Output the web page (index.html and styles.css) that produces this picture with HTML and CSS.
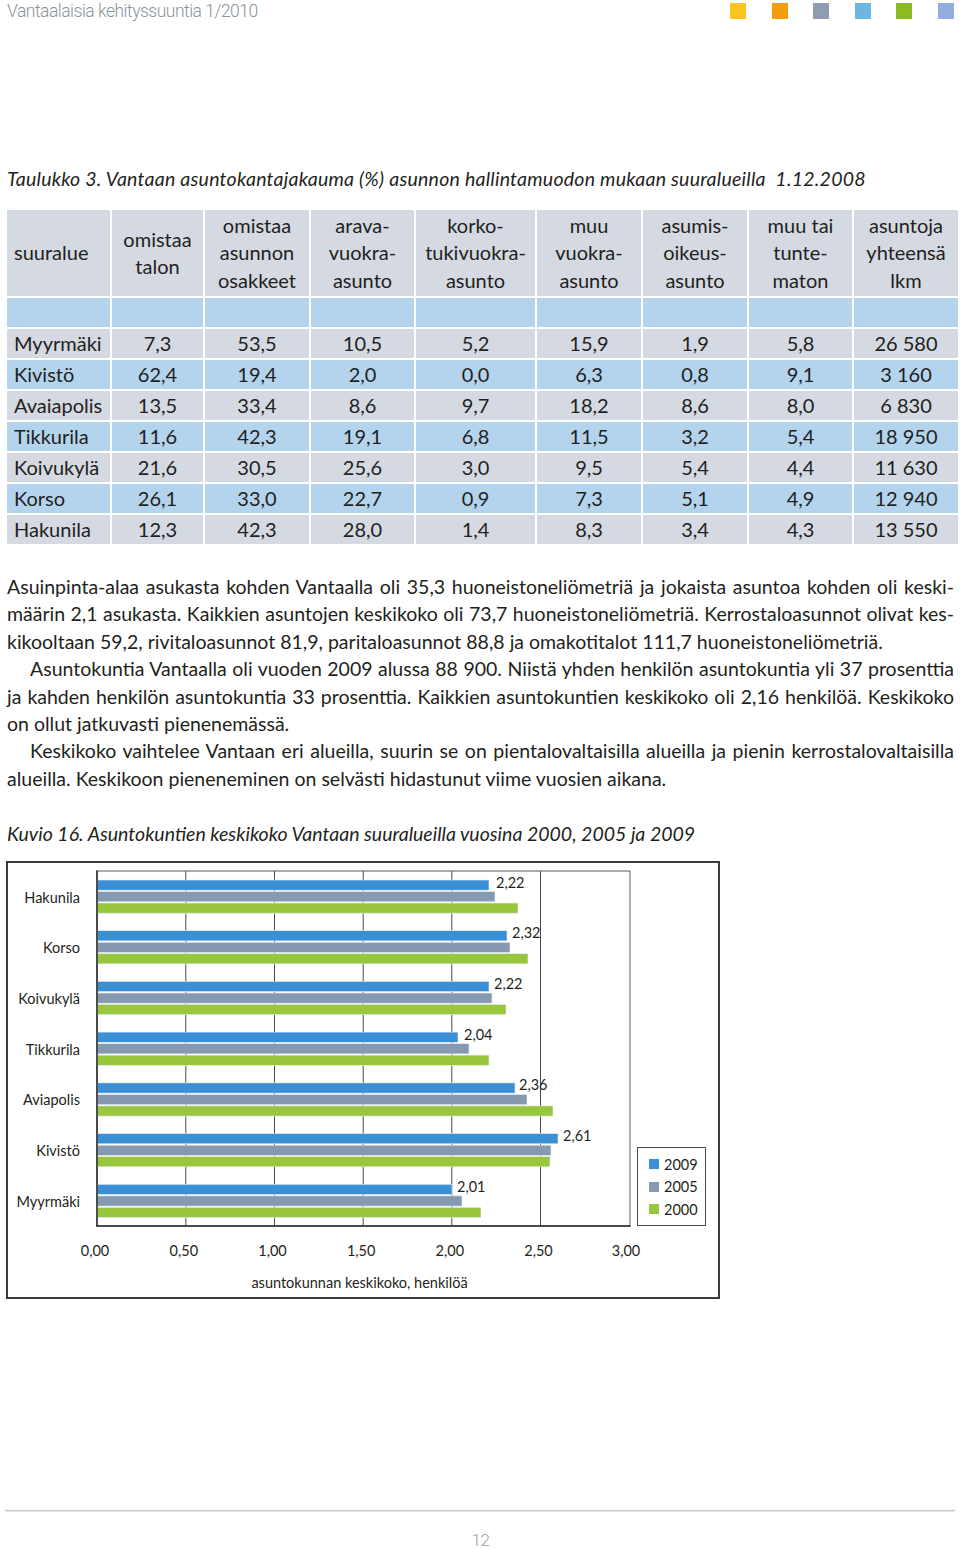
FILE: index.html
```html
<!DOCTYPE html>
<html lang="fi">
<head>
<meta charset="utf-8">
<title>Vantaalaisia kehityssuuntia 1/2010</title>
<link rel="stylesheet" href="styles.css">
</head>
<body>
<div class="page">
  <header class="top">
    <div class="top-title">Vantaalaisia kehityssuuntia 1/2010</div>
    <div class="swatches">
      <span class="sw sw-yellow"></span>
      <span class="sw sw-orange"></span>
      <span class="sw sw-slate"></span>
      <span class="sw sw-sky"></span>
      <span class="sw sw-green"></span>
      <span class="sw sw-blue"></span>
    </div>
  </header>

  <p class="caption cap-table">Taulukko 3. Vantaan asuntokantajakauma (%) asunnon hallintamuodon mukaan suuralueilla&nbsp; 1.12.2008</p>

  <table class="stats">
    <colgroup>
      <col class="c1"><col class="c2"><col class="c3"><col class="c4"><col class="c5"><col class="c6"><col class="c7"><col class="c8"><col class="c9">
    </colgroup>
    <thead>
      <tr class="head">
        <th class="first">suuralue</th>
        <th>omistaa<br>talon</th>
        <th>omistaa<br>asunnon<br>osakkeet</th>
        <th>arava-<br>vuokra-<br>asunto</th>
        <th>korko-<br>tukivuokra-<br>asunto</th>
        <th>muu<br>vuokra-<br>asunto</th>
        <th>asumis-<br>oikeus-<br>asunto</th>
        <th>muu tai<br>tunte-<br>maton</th>
        <th>asuntoja<br>yhteensä<br>lkm</th>
      </tr>
      <tr class="blank">
        <td></td><td></td><td></td><td></td><td></td><td></td><td></td><td></td><td></td>
      </tr>
    </thead>
    <tbody>
      <tr class="g"><td class="first">Myyrmäki</td><td>7,3</td><td>53,5</td><td>10,5</td><td>5,2</td><td>15,9</td><td>1,9</td><td>5,8</td><td>26 580</td></tr>
      <tr class="b"><td class="first">Kivistö</td><td>62,4</td><td>19,4</td><td>2,0</td><td>0,0</td><td>6,3</td><td>0,8</td><td>9,1</td><td>3 160</td></tr>
      <tr class="g"><td class="first">Avaiapolis</td><td>13,5</td><td>33,4</td><td>8,6</td><td>9,7</td><td>18,2</td><td>8,6</td><td>8,0</td><td>6 830</td></tr>
      <tr class="b"><td class="first">Tikkurila</td><td>11,6</td><td>42,3</td><td>19,1</td><td>6,8</td><td>11,5</td><td>3,2</td><td>5,4</td><td>18 950</td></tr>
      <tr class="g"><td class="first">Koivukylä</td><td>21,6</td><td>30,5</td><td>25,6</td><td>3,0</td><td>9,5</td><td>5,4</td><td>4,4</td><td>11 630</td></tr>
      <tr class="b"><td class="first">Korso</td><td>26,1</td><td>33,0</td><td>22,7</td><td>0,9</td><td>7,3</td><td>5,1</td><td>4,9</td><td>12 940</td></tr>
      <tr class="g"><td class="first">Hakunila</td><td>12,3</td><td>42,3</td><td>28,0</td><td>1,4</td><td>8,3</td><td>3,4</td><td>4,3</td><td>13 550</td></tr>
    </tbody>
  </table>

  <div class="body-text">
    <span class="ln">Asuinpinta-alaa asukasta kohden Vantaalla oli 35,3 huoneistoneliömetriä ja jokaista asuntoa kohden oli keski-</span>
    <span class="ln">määrin 2,1 asukasta. Kaikkien asuntojen keskikoko oli 73,7 huoneistoneliömetriä. Kerrostaloasunnot olivat kes-</span>
    <span class="ln last">kikooltaan 59,2, rivitaloasunnot 81,9, paritaloasunnot 88,8 ja omakotitalot 111,7 huoneistoneliömetriä.</span>
    <span class="ln ind">Asuntokuntia Vantaalla oli vuoden 2009 alussa 88 900. Niistä yhden henkilön asuntokuntia yli 37 prosenttia</span>
    <span class="ln">ja kahden henkilön asuntokuntia 33 prosenttia. Kaikkien asuntokuntien keskikoko oli 2,16 henkilöä. Keskikoko</span>
    <span class="ln last">on ollut jatkuvasti pienenemässä.</span>
    <span class="ln ind">Keskikoko vaihtelee Vantaan eri alueilla, suurin se on pientalovaltaisilla alueilla ja pienin kerrostalovaltaisilla</span>
    <span class="ln last">alueilla. Keskikoon pieneneminen on selvästi hidastunut viime vuosien aikana.</span>
  </div>

  <p class="caption cap-fig">Kuvio 16. Asuntokuntien keskikoko Vantaan suuralueilla vuosina 2000, 2005 ja 2009</p>

  <figure class="chart">
    <svg class="chart-svg" width="710" height="434" viewBox="8 864 710 434" xmlns="http://www.w3.org/2000/svg">
      <g class="grid">
        <line x1="185.8" y1="872" x2="185.8" y2="1227"/>
        <line x1="274.5" y1="872" x2="274.5" y2="1227"/>
        <line x1="363.2" y1="872" x2="363.2" y2="1227"/>
        <line x1="451.8" y1="872" x2="451.8" y2="1227"/>
        <line x1="540.5" y1="872" x2="540.5" y2="1227"/>
      </g>
      <rect class="plot" x="97" y="872" width="533" height="355"/>
      <g class="bars">
        <rect class="b09" x="97.5" y="881" width="391.5" height="10.2"/>
        <rect class="b05" x="97.5" y="892.6" width="397.5" height="10.2"/>
        <rect class="b00" x="97.5" y="904" width="420.5" height="10.2"/>

        <rect class="b09" x="97.5" y="931.7" width="409.5" height="10.2"/>
        <rect class="b05" x="97.5" y="943.3" width="412.5" height="10.2"/>
        <rect class="b00" x="97.5" y="954.7" width="430.5" height="10.2"/>

        <rect class="b09" x="97.5" y="982.4" width="391.5" height="10.2"/>
        <rect class="b05" x="97.5" y="994" width="394.5" height="10.2"/>
        <rect class="b00" x="97.5" y="1005.4" width="408.5" height="10.2"/>

        <rect class="b09" x="97.5" y="1033.1" width="360.5" height="10.2"/>
        <rect class="b05" x="97.5" y="1044.7" width="371.5" height="10.2"/>
        <rect class="b00" x="97.5" y="1056.1" width="391.5" height="10.2"/>

        <rect class="b09" x="97.5" y="1083.9" width="417.5" height="10.2"/>
        <rect class="b05" x="97.5" y="1095.5" width="429.5" height="10.2"/>
        <rect class="b00" x="97.5" y="1106.9" width="455.5" height="10.2"/>

        <rect class="b09" x="97.5" y="1134.6" width="460.5" height="10.2"/>
        <rect class="b05" x="97.5" y="1146.2" width="453.5" height="10.2"/>
        <rect class="b00" x="97.5" y="1157.6" width="452.5" height="10.2"/>

        <rect class="b09" x="97.5" y="1185.3" width="354.5" height="10.2"/>
        <rect class="b05" x="97.5" y="1196.9" width="364.5" height="10.2"/>
        <rect class="b00" x="97.5" y="1208.3" width="383.5" height="10.2"/>
      </g>
      <g class="axis">
        <line x1="97" y1="871.5" x2="97" y2="1227.5"/>
        <line x1="96.5" y1="1227" x2="630.5" y2="1227"/>
      </g>
      <g class="vals">
        <text x="496" y="888.5">2,22</text>
        <text x="512" y="939.2">2,32</text>
        <text x="494" y="989.9">2,22</text>
        <text x="464" y="1040.6">2,04</text>
        <text x="519" y="1091.4">2,36</text>
        <text x="563" y="1142.1">2,61</text>
        <text x="457" y="1192.8">2,01</text>
      </g>
      <g class="cats">
        <text x="80" y="903.5">Hakunila</text>
        <text x="80" y="954.2">Korso</text>
        <text x="80" y="1004.9">Koivukylä</text>
        <text x="80" y="1055.6">Tikkurila</text>
        <text x="80" y="1106.4">Aviapolis</text>
        <text x="80" y="1157.1">Kivistö</text>
        <text x="80" y="1207.8">Myyrmäki</text>
      </g>
      <g class="ticks">
        <text x="95" y="1257">0,00</text>
        <text x="183.8" y="1257">0,50</text>
        <text x="272.5" y="1257">1,00</text>
        <text x="361.2" y="1257">1,50</text>
        <text x="449.8" y="1257">2,00</text>
        <text x="538.5" y="1257">2,50</text>
        <text x="626" y="1257">3,00</text>
      </g>
      <text class="axis-title" x="359.5" y="1289">asuntokunnan keskikoko, henkilöä</text>
      <g class="legend">
        <rect class="legend-box" x="637.5" y="1148.5" width="68" height="78"/>
        <rect class="b09" x="649" y="1160" width="10" height="10"/>
        <text x="664" y="1170.5">2009</text>
        <rect class="b05" x="649" y="1183" width="10" height="10"/>
        <text x="664" y="1193">2005</text>
        <rect class="b00" x="649" y="1205" width="10" height="10"/>
        <text x="664" y="1215.5">2000</text>
      </g>
    </svg>
  </figure>

  <footer class="foot">
    <div class="foot-line"></div>
    <div class="page-num">12</div>
  </footer>
</div>
</body>
</html>
```

FILE: styles.css
```css
html, body {
  margin: 0;
  padding: 0;
  background: #ffffff;
}

body {
  color: #231f20;
  font-family: Lato, "Open Sans", sans-serif;
}

.page {
  width: 960px;
  box-sizing: border-box;
  padding: 0 2px 0 7px;
}

/* top bar */
.top {
  display: flex;
  justify-content: space-between;
  align-items: flex-start;
  height: 22px;
}

.top-title {
  font-family: Roboto, sans-serif;
  font-weight: 300;
  font-size: 17.5px;
  letter-spacing: -0.5px;
  line-height: 22px;
  color: #8a949b;
}

.swatches {
  display: flex;
  gap: 25.6px;
  margin-top: 3px;
  margin-right: 4px;
}

.sw {
  display: block;
  width: 16px;
  height: 16px;
}
.sw-yellow { background: #fbc41c; }
.sw-orange { background: #f39d0a; }
.sw-slate { background: #8e9db1; }
.sw-sky { background: #6db6e2; }
.sw-green { background: #8cba21; }
.sw-blue { background: #8faed9; }

/* captions */
.caption {
  margin: 0;
  font-style: italic;
  font-size: 19.5px;
  line-height: 24px;
  color: #231f20;
}

.cap-table {
  margin-top: 145px;
  letter-spacing: 0.24px;
}

.cap-fig {
  margin-top: 30px;
}

/* table */
.stats {
  border-collapse: separate;
  border-spacing: 2px;
  table-layout: fixed;
  width: 955px;
  margin: 17px 0 0 -2px;
  font-size: 20px;
  color: #231f20;
}

.c1 { width: 103px; }
.c2 { width: 91px; }
.c3 { width: 104px; }
.c4 { width: 103px; }
.c5 { width: 119px; }
.c6 { width: 104px; }
.c7 { width: 104px; }
.c8 { width: 103px; }
.c9 { width: 104px; }

.stats th,
.stats td {
  padding: 0;
  text-align: center;
  vertical-align: middle;
  white-space: nowrap;
}

.head th {
  height: 86px;
  font-weight: normal;
  line-height: 27.5px;
  background: #d4d9e2;
}

.blank td {
  height: 29px;
  background: #b4d4ee;
}

.stats tbody td {
  height: 29px;
  line-height: 29px;
}

.stats tr.g td { background: #d4d9e2; }
.stats tr.b td { background: #b4d4ee; }

.stats .first {
  text-align: left;
  padding-left: 7px;
}

/* body text */
.body-text {
  margin: 27px 4px 0 0;
  font-size: 19.5px;
  line-height: 27.4px;
  color: #231f20;
}

.ln {
  display: block;
  text-align: justify;
  text-align-last: justify;
  white-space: nowrap;
}

.ln.last {
  text-align-last: left;
}

.ln.ind {
  text-indent: 23px;
}

/* chart */
.chart {
  margin: 15px 0 0 -1px;
  width: 714px;
  height: 438px;
  box-sizing: border-box;
  border: 2px solid #3a3a3a;
  padding: 0;
}

.chart-svg {
  display: block;
  font-family: Lato, "Open Sans", sans-serif;
  font-size: 14.5px;
  fill: #231f20;
}

.grid line {
  stroke: #4a4a4a;
  stroke-width: 1;
}

.plot {
  fill: none;
  stroke: #5a5a5a;
  stroke-width: 1;
}

.axis line {
  stroke: #2a2a2a;
  stroke-width: 1.5;
}

.b09 { fill: #3b8fd5; }
.b05 { fill: #8799b1; }
.b00 { fill: #98c73d; }

.bars rect {
  stroke: #e6eef6;
  stroke-width: 0.6;
}

.cats text {
  text-anchor: end;
}

.ticks text,
.axis-title {
  text-anchor: middle;
}

.legend-box {
  fill: #ffffff;
  stroke: #4a4a4a;
  stroke-width: 1;
}

/* footer */
.foot {
  margin-top: 211px;
}

.foot-line {
  margin: 0 3px 0 -2px;
  height: 1px;
  background: #c4c6c8;
  border-bottom: 1px solid #e6e7e8;
}

.page-num {
  margin-top: 20px;
  text-align: center;
  font-family: Roboto, sans-serif;
  font-weight: 300;
  font-size: 17px;
  letter-spacing: -0.5px;
  line-height: 17px;
  color: #98a2a8;
  padding-right: 4px;
}
```
